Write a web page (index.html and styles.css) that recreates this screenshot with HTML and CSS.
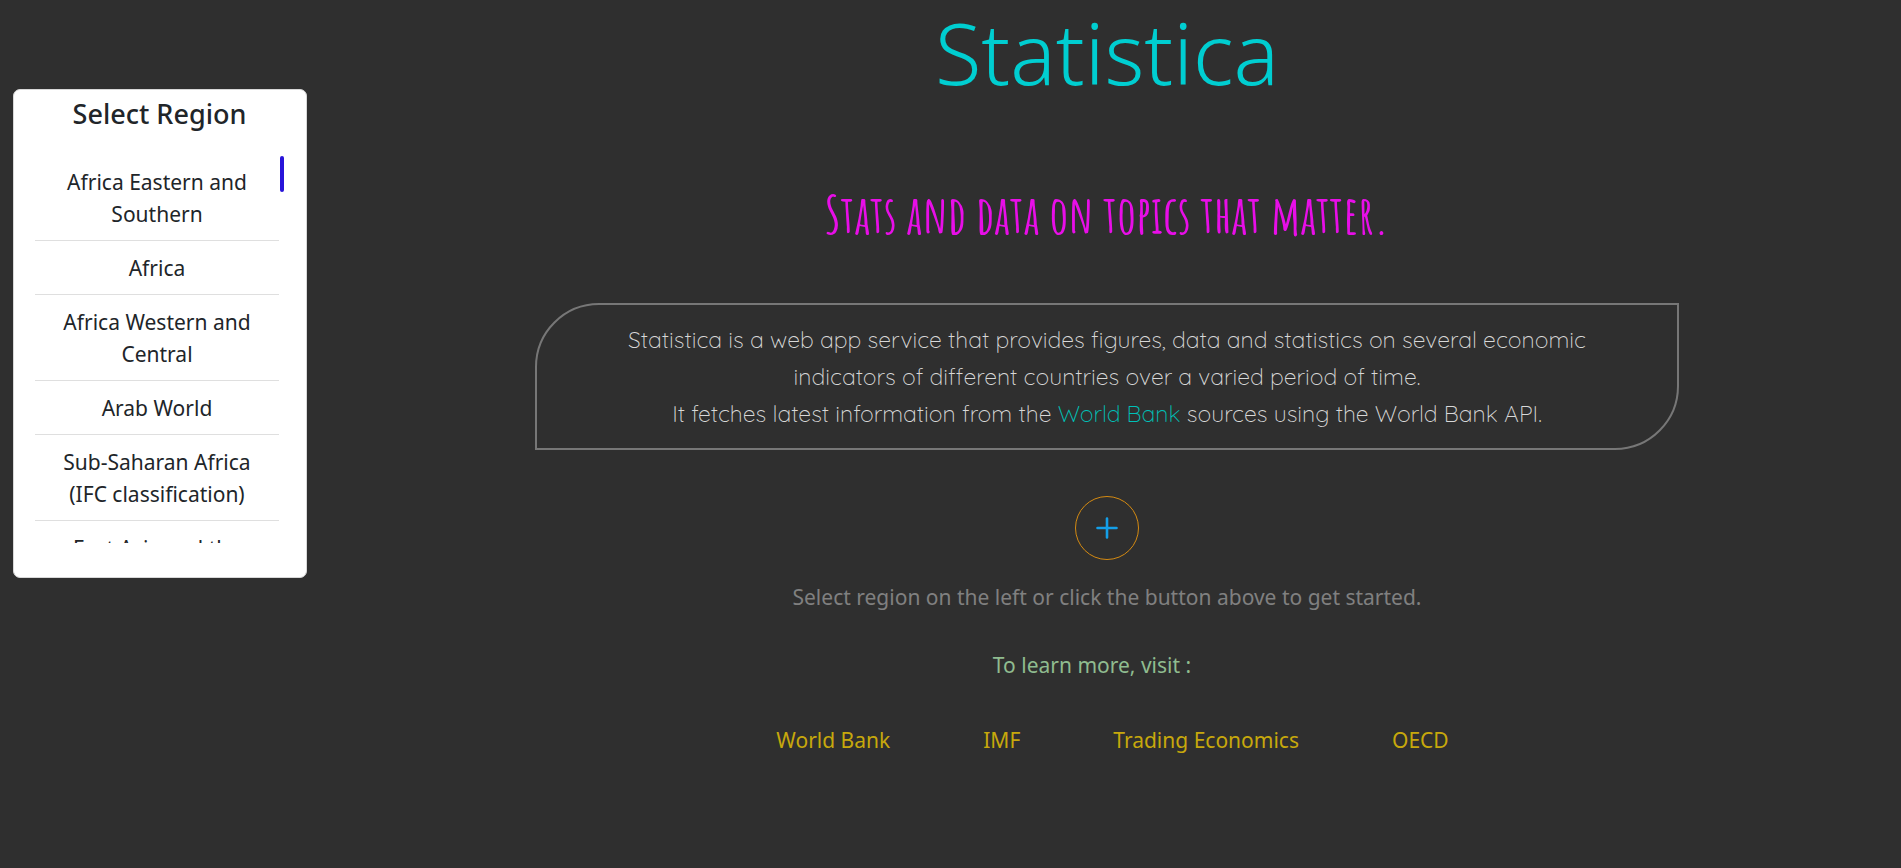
FILE: index.html
```html
<!DOCTYPE html>
<html lang="en">
<head>
<meta charset="utf-8">
<title>Statistica</title>
<link rel="stylesheet" href="styles.css">
</head>
<body>
<div class="layout">
  <aside class="sidebar">
    <section class="card">
      <h2 class="card-title">Select Region</h2>
      <ul class="regions">
        <li class="region">Africa Eastern and Southern</li>
        <li class="region">Africa</li>
        <li class="region">Africa Western and Central</li>
        <li class="region">Arab World</li>
        <li class="region">Sub-Saharan Africa (IFC classification)</li>
        <li class="region">East Asia and the Pacific</li>
        <li class="thumb" aria-hidden="true"></li>
      </ul>
    </section>
  </aside>
  <main class="main">
    <h1 class="title">Statistica</h1>
    <p class="tagline">Stats and data on topics that matter.</p>
    <p class="about">Statistica is a web app service that provides figures, data and statistics on several economic indicators of different countries over a varied period of time.<br>It fetches latest information from the <a href="#worldbank">World Bank</a> sources using the World Bank API.</p>
    <button class="add" type="button" aria-label="Add">
      <svg width="24" height="24" viewBox="0 0 24 24" fill="none" stroke="currentColor" stroke-width="2.6" stroke-linecap="round"><path d="M12 2.5v19M2.5 12h19"/></svg>
    </button>
    <p class="hint">Select region on the left or click the button above to get started.</p>
    <p class="learn">To learn more, visit :</p>
    <nav class="links">
      <a href="#worldbank">World Bank</a>
      <a href="#imf">IMF</a>
      <a href="#trading">Trading Economics</a>
      <a href="#oecd">OECD</a>
    </nav>
  </main>
</div>
</body>
</html>
```
FILE: styles.css
```css
* { box-sizing: border-box; }
body {
  margin: 0;
  background: #2f2f2f;
  color: #212529;
  font: 21px/32px "Noto Sans", sans-serif;
}
h1, h2, p, ul { margin: 0; padding: 0; }
a { text-decoration: none; }
.layout { display: flex; align-items: flex-start; }
.sidebar { flex: 0 0 313px; padding: 89px 6px 0 13px; }
.card {
  padding: 7px 22px 34px 21px;
  background: #fff;
  border: 1px solid #d8d8d8;
  border-radius: 7px;
  text-align: center;
}
.card-title { margin-bottom: 24px; font-size: 27px; line-height: 34px; font-weight: 500; }
.regions {
  position: relative;
  height: 388px;
  padding-right: 5px;
  overflow: hidden;
  list-style: none;
}
.region { padding: 11px 21px 10px; border-bottom: 1px solid #dfdfdf; }
.thumb {
  position: absolute;
  top: 1px;
  right: 0;
  width: 4px;
  height: 36px;
  border-radius: 2px;
  background: #2814d9;
}
.main {
  flex: 1;
  display: flex;
  flex-direction: column;
  align-items: center;
  text-align: center;
}
.title { color: #00ced1; font-size: 85px; line-height: 104px; font-weight: 300; }
.tagline {
  margin-top: 77px;
  color: #e80ee8;
  font: 700 53px/66px "Amatic SC", "Noto Sans", sans-serif;
}
.about {
  width: 72%;
  margin-top: 56px;
  padding: 16px 64px;
  border: 2px solid #777;
  border-radius: 64px 0;
  color: #d8d8d8;
  font: 300 23px/37px Quicksand, Lato, sans-serif;
}
.about a { color: #00c0b8; }
.add {
  display: grid;
  place-items: center;
  width: 64px;
  height: 64px;
  margin-top: 46px;
  padding: 0;
  border: 1px solid #d48a12;
  border-radius: 50%;
  background: none;
  color: #149fe8;
}
.hint { margin-top: 21px; color: #808080; }
.learn { margin-top: 36px; padding-right: 30px; color: #8fbc8f; }
.links { display: flex; gap: 93px; margin-top: 43px; padding-left: 11px; }
.links a { color: #c7a80c; }
```
